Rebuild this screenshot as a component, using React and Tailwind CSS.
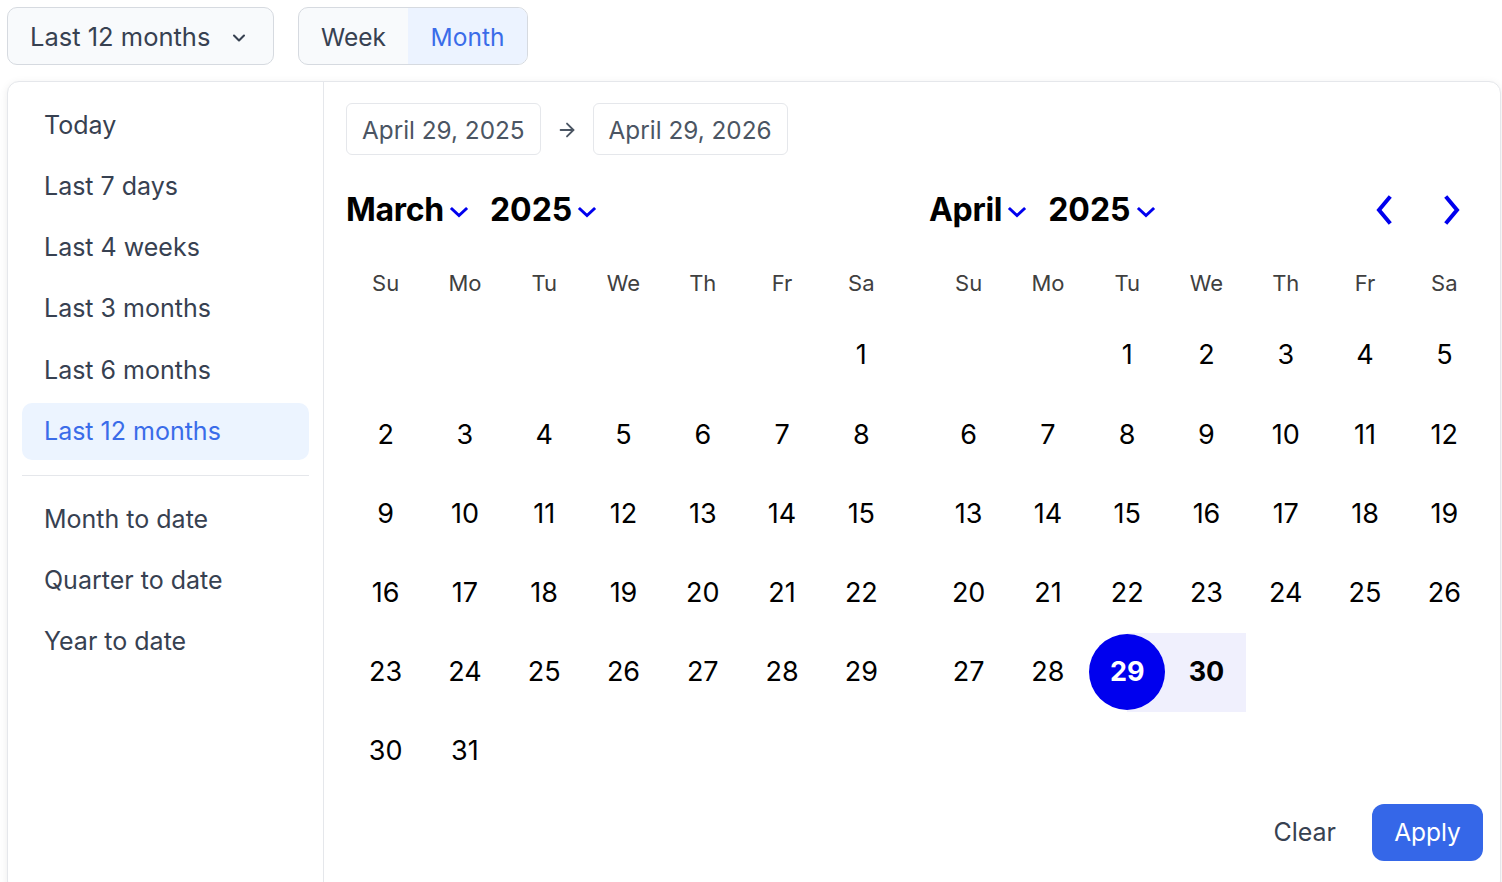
import { ChevronDown, ArrowRight } from 'lucide-react';

const presetsTop = ['Today', 'Last 7 days', 'Last 4 weeks', 'Last 3 months', 'Last 6 months', 'Last 12 months'];
const presetsBottom = ['Month to date', 'Quarter to date', 'Year to date'];
const weekdays = ['Su', 'Mo', 'Tu', 'We', 'Th', 'Fr', 'Sa'];

function BlueChevron({ className = '' }) {
    return (
        <svg viewBox="0 0 20 12" className={`w-[20px] h-[12px] ${className}`} fill="none" stroke="#0000ee" strokeWidth="3" strokeLinecap="square">
            <path d="M3 3l7 6.5L17 3" />
        </svg>
    );
}

function NavArrow({ dir }) {
    return (
        <svg viewBox="0 0 20 30" className="w-[20px] h-[30px]" fill="none" stroke="#0000ee" strokeWidth="4" strokeLinecap="square">
            {dir === 'left' ? <path d="M15 3L5 15l10 12" /> : <path d="M5 3l10 12L5 27" />}
        </svg>
    );
}

function Month({ name, offset, days, nav }) {
    const cells = [...Array(offset).fill(null), ...Array.from({ length: days }, (_, i) => i + 1)];

    return (
        <div className="w-[555px]">
            {/* Header */}
            <div className="flex items-center h-[40px]">
                <span className="text-[32px] font-bold text-black tracking-[-0.3px]">{name}</span>
                <BlueChevron className="ml-[5px] mt-[3px]" />
                <span className="ml-[21px] text-[32px] font-bold text-black">2025</span>
                <BlueChevron className="ml-[5px] mt-[3px]" />
                {nav && (
                    <div className="ml-auto flex items-center gap-[48px] mr-[22px]">
                        <NavArrow dir="left" />
                        <NavArrow dir="right" />
                    </div>
                )}
            </div>

            {/* Weekdays */}
            <div className="grid grid-cols-7 mt-[21px] h-[65px] items-center">
                {weekdays.map((d) => (
                    <div key={d} className="text-center text-[22px] text-[#404040]">{d}</div>
                ))}
            </div>

            {/* Days */}
            <div className="grid grid-cols-7">
                {cells.map((day, i) => {
                    if (!day) return <div key={i} className="h-[79.2px]" />;
                    const isStart = nav && day === 29;
                    const isEnd = nav && day === 30;
                    return (
                        <div
                            key={i}
                            className={`relative h-[79.2px] flex items-center justify-center ${isEnd ? 'bg-[#f0f0fd]' : ''}`}
                        >
                            {isStart && <div className="absolute right-0 top-0 bottom-0 w-1/2 bg-[#f0f0fd]" />}
                            {isStart ? (
                                <span className="relative w-[76px] h-[76px] rounded-full bg-[#0000ee] text-white font-bold text-[27px] flex items-center justify-center">
                                    {day}
                                </span>
                            ) : (
                                <span className={`text-[27px] text-black ${isEnd ? 'font-bold' : ''}`}>{day}</span>
                            )}
                        </div>
                    );
                })}
            </div>
        </div>
    );
}

export default function App() {
    return (
        <div className="min-h-screen bg-white font-['Inter',sans-serif] overflow-hidden">
            {/* Top controls */}
            <div className="flex pt-[7px] pl-[7px]">
                <button className="w-[267px] h-[58px] rounded-[10px] border border-[#d6dae0] bg-[#f8fafc] flex items-center pt-[3px] pl-[22px] pr-[24px] text-[25.5px] text-[#374151]">
                    <span>Last 12 months</span>
                    <ChevronDown size={20} strokeWidth={2.5} className="ml-auto" />
                </button>
                <div className="ml-[24px] h-[58px] rounded-[10px] border border-[#d6dae0] bg-[#f8fafc] flex overflow-hidden text-[24.5px]">
                    <div className="w-[109px] pt-[3px] flex items-center justify-center text-[#374151]">Week</div>
                    <div className="w-[119px] pt-[3px] flex items-center justify-center bg-[#ecf3ff] text-[#3a6ce9]">Month</div>
                </div>
            </div>

            {/* Picker panel */}
            <div className="mt-[16px] ml-[7px] w-[1494px] h-[812px] rounded-xl border border-[#e5e7eb] bg-white shadow-[0_2px_8px_rgba(0,0,0,0.08)] flex">
                {/* Presets */}
                <div className="w-[316px] border-r border-[#e5e7eb] px-[14px] pt-[15px] flex flex-col text-[25px] text-[#374151]">
                    <div className="flex flex-col gap-[4px]">
                        {presetsTop.map((p) => (
                            <div
                                key={p}
                                className={`h-[57.2px] rounded-[10px] px-[22px] flex items-center ${p === 'Last 12 months' ? 'bg-[#ecf4ff] text-[#3a6ce9]' : ''}`}
                            >
                                {p}
                            </div>
                        ))}
                    </div>
                    <div className="my-[15px] h-px bg-[#e5e7eb]" />
                    <div className="flex flex-col gap-[4px]">
                        {presetsBottom.map((p) => (
                            <div key={p} className="h-[57.2px] rounded-[10px] px-[22px] flex items-center">
                                {p}
                            </div>
                        ))}
                    </div>
                </div>

                {/* Calendars */}
                <div className="flex-1 pl-[22px] pt-[21px] flex flex-col">
                    <div className="flex items-center h-[52px]">
                        <div className="h-[52px] px-[15px] pt-[3px] flex items-center rounded-md border border-[#e5e7eb] text-[24.3px] text-[#4b5563]">
                            April 29, 2025
                        </div>
                        <ArrowRight size={22} strokeWidth={2} className="mx-[15px] mt-[2px] text-[#4b5563]" />
                        <div className="h-[52px] px-[15px] pt-[3px] flex items-center rounded-md border border-[#e5e7eb] text-[24.3px] text-[#4b5563]">
                            April 29, 2026
                        </div>
                    </div>

                    <div className="mt-[35px] flex items-start gap-[28px]">
                        <Month name="March" offset={6} days={31} />
                        <Month name="April" offset={2} days={30} nav />
                    </div>

                    <div className="mt-[13px] flex items-center justify-end pr-[17px]">
                        <button className="text-[25px] text-[#374151] mr-[36px]">Clear</button>
                        <button className="w-[111px] h-[57px] rounded-[12px] bg-[#3567e8] text-white text-[24.5px]">Apply</button>
                    </div>
                </div>
            </div>
        </div>
    );
}
